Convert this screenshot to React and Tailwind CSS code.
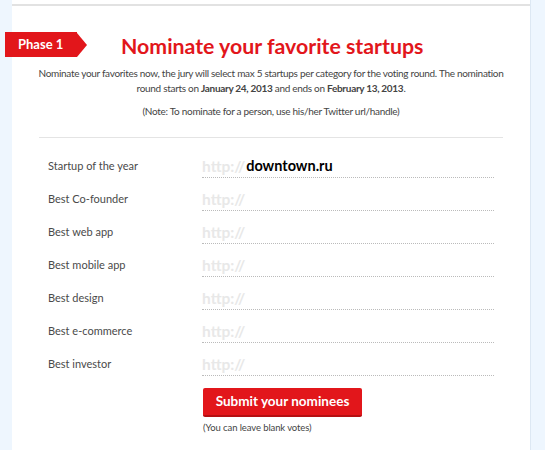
export default function App() {
  const fields = [
    { label: 'Startup of the year', value: 'downtown.ru' },
    { label: 'Best Co-founder' },
    { label: 'Best web app' },
    { label: 'Best mobile app' },
    { label: 'Best design' },
    { label: 'Best e-commerce' },
    { label: 'Best investor' },
  ]

  return (
    <div className="w-[545px] h-[450px] overflow-hidden bg-[#eef6fe] font-['Lato',sans-serif]">
      <div className="ml-[12px] w-[519px] h-[450px] bg-white border-r border-[#dde8f3] pt-[4px]">
        <div className="h-[2px] bg-[#e2e2e2]" />

        {/* Header */}
        <div className="relative h-[60px]">
          <div className="absolute left-[-7px] top-[26px] flex items-center">
            <div className="h-[25px] w-[72px] bg-[#e2161b] flex items-center pl-[13px] text-white text-[13px] font-bold">
              Phase 1
            </div>
            <div className="w-0 h-0 border-y-[12.5px] border-y-transparent border-l-[10px] border-l-[#e2161b]" />
          </div>
          <h1 className="absolute left-[109px] top-[25px] text-[21.3px] leading-[30px] font-bold text-[#e2161b]">
            Nominate your favorite startups
          </h1>
        </div>

        <p className="px-[24px] text-center text-[10px] tracking-[-0.3px] leading-[15px] text-[#444]">
          Nominate your favorites now, the jury will select max 5 startups per category for the voting round. The nomination round starts on <b>January 24, 2013</b> and ends on <b>February 13, 2013</b>.
        </p>
        <p className="mt-[8px] text-center text-[10px] tracking-[-0.3px] leading-[15px] text-[#444]">
          (Note: To nominate for a person, use his/her Twitter url/handle)
        </p>

        <div className="mx-[27px] mt-[18px] h-px bg-[#e4e4e4]" />

        {/* Nomination fields */}
        <div className="mt-[12px]">
          {fields.map((f) => (
            <div key={f.label} className="flex items-center h-[33px]">
              <div className="w-[190px] pl-[36px] text-[11px] text-[#4a4a4a]">{f.label}</div>
              <div className="w-[292px] h-[22px] border-b border-dotted border-[#bbb] flex items-end pb-[2px]">
                <span className="text-[15.5px] font-bold text-[#e8e8e8] leading-[18px]">http://</span>
                {f.value && (
                  <span className="ml-[1px] text-[14.5px] font-bold text-black leading-[18px]">{f.value}</span>
                )}
              </div>
            </div>
          ))}
        </div>

        <div className="ml-[191px] mt-[7px]">
          <button className="w-[159px] h-[29px] bg-[#e2161b] rounded-[2px] border-b-2 border-[#b50f12] text-white text-[13.5px] font-bold">
            Submit your nominees
          </button>
          <div className="mt-[5px] text-[9.5px] leading-[12px] tracking-[-0.1px] text-[#444]">(You can leave blank votes)</div>
        </div>
      </div>
    </div>
  )
}
